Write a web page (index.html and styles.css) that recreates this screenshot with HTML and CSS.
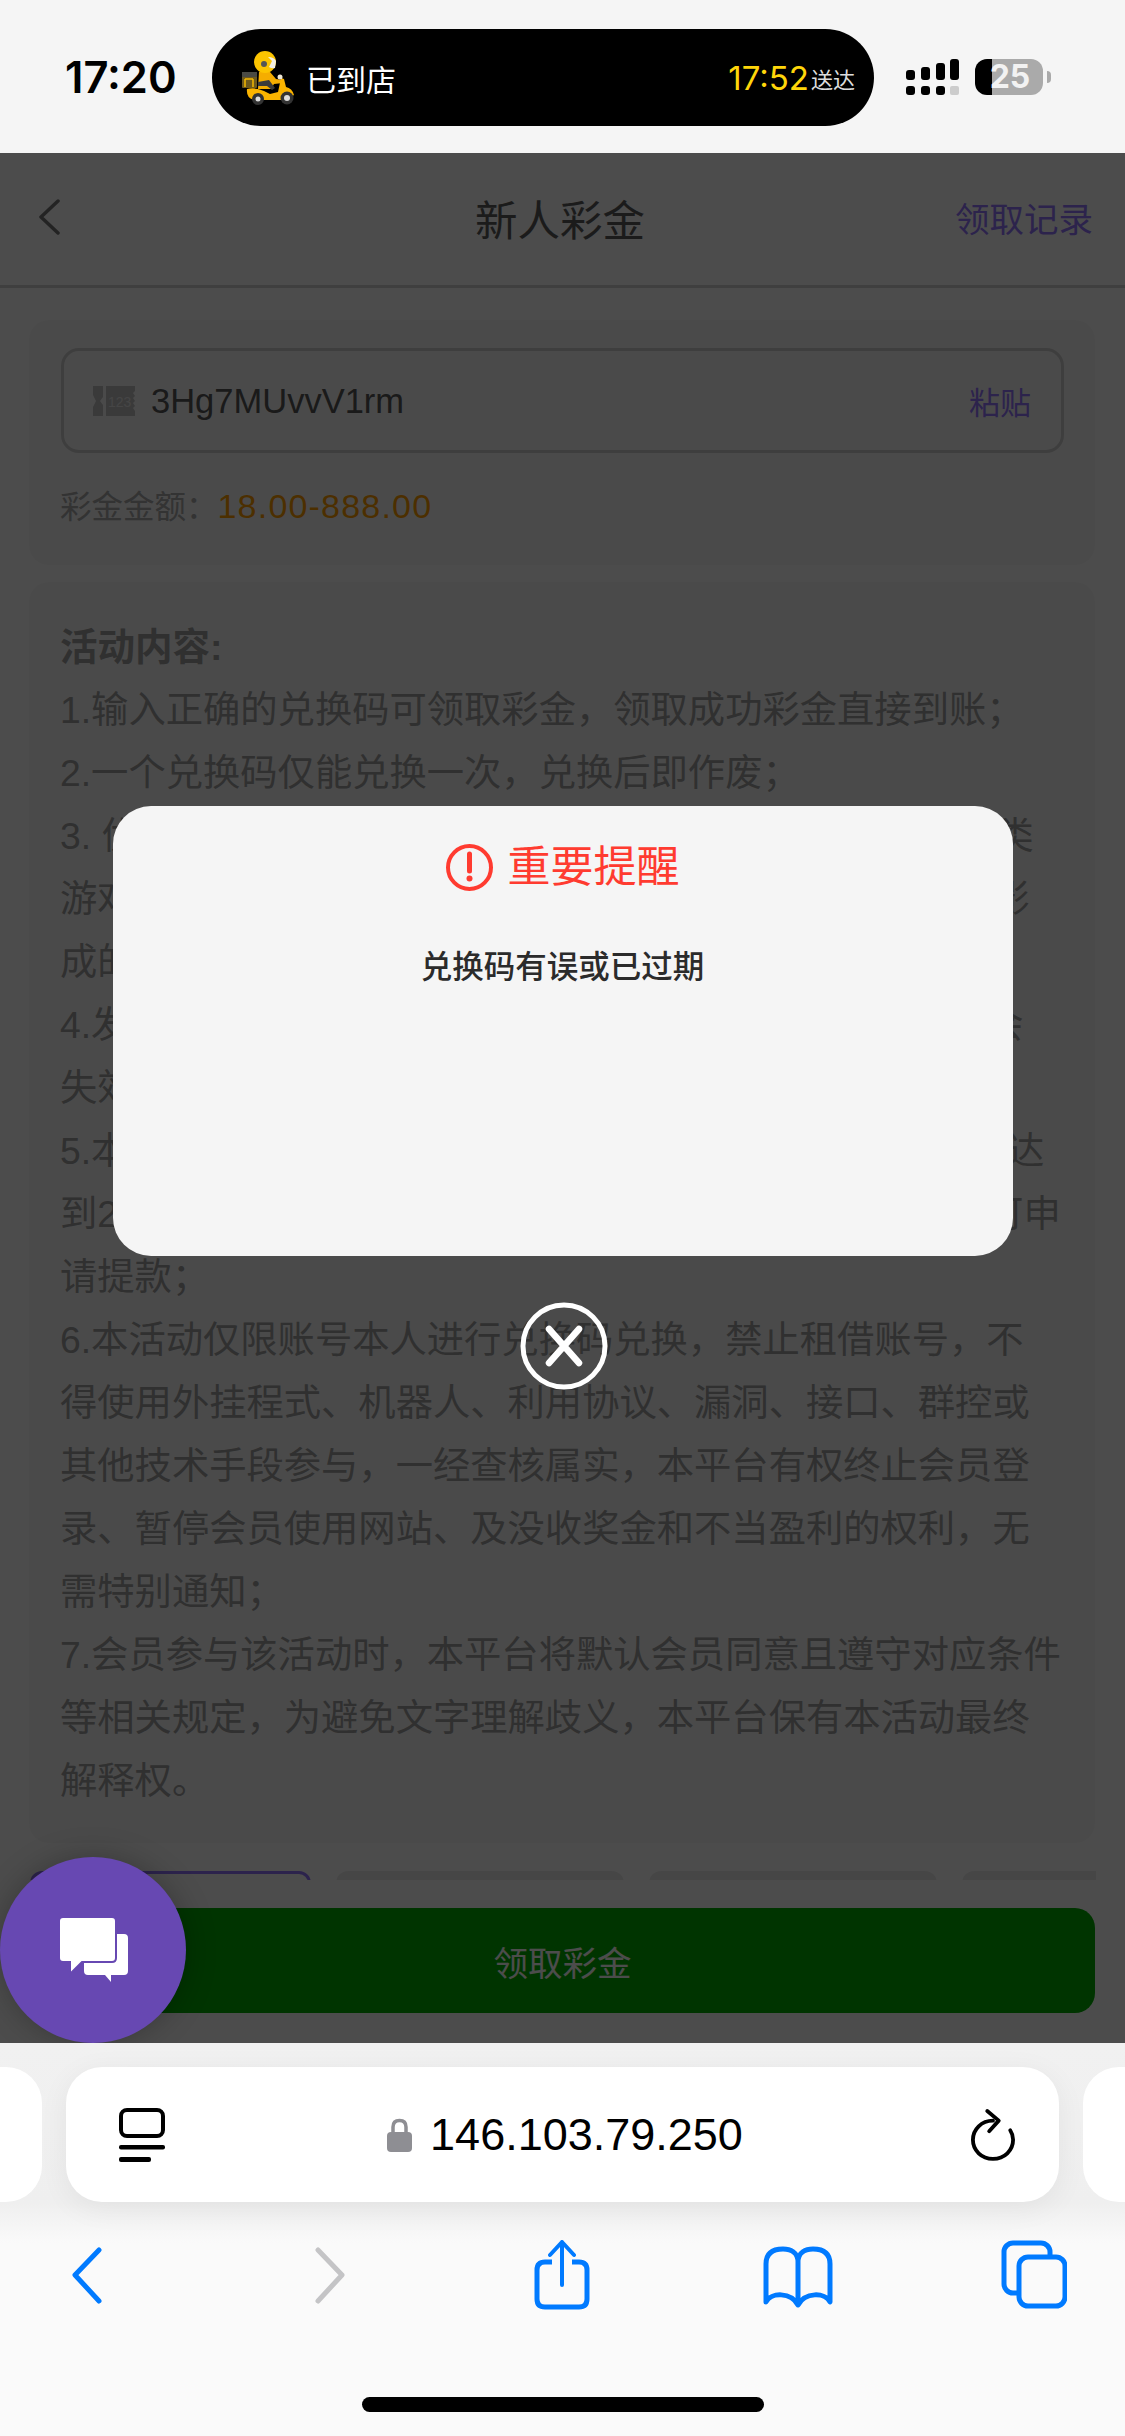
FILE: index.html
```html
<!DOCTYPE html>
<html lang="zh-CN">
<head>
<meta charset="UTF-8">
<meta name="viewport" content="width=device-width, initial-scale=1.0">
<title>新人彩金</title>
<link rel="stylesheet" href="styles.css">
</head>
<body>
<div class="phone">

<div class="status-bar">
<span class="clock">17:20</span>
<div class="island">
<svg class="rider" viewBox="0 0 52 54">
<rect x="0" y="21" width="15" height="16" rx="1" fill="#6e5a1e"/>
<rect x="0" y="21" width="15" height="5" fill="#4a4a44"/>
<path d="M3 28v8M11 28v8M3 28h8" stroke="#f5b800" stroke-width="1.5" fill="none"/>
<path d="M17 21q6-4 11 0l6 7 7 1v3l-9 1-3 5H16z" fill="#f5ad00"/>
<path d="M16 31l11-2 6 8-3 2-5-4H16z" fill="#3b3b3b"/>
<path d="M5 38q8-2 17 2l6 3 8-2 3-14 3 1 2 8q6 1 8 8l-8 5H12q-8-2-7-11z" fill="#fbb400"/>
<circle cx="16" cy="48" r="6" fill="#333"/>
<circle cx="16" cy="48" r="2.5" fill="#ddd"/>
<circle cx="45" cy="47" r="6.5" fill="#333"/>
<circle cx="45" cy="47" r="3" fill="#ddd"/>
<circle cx="23" cy="11" r="11" fill="#fcc400"/>
<path d="M26 6q6 0 8 4l-1 7q-3 1-6-1l3-6z" fill="#f4f0e4"/>
<circle cx="22" cy="13" r="3" fill="#555"/>
<circle cx="38" cy="26" r="2.5" fill="#f1e9d6"/>
</svg>
<span class="island-text">已到店</span>
<span class="eta">17:52</span>
<span class="eta-label">送达</span>
</div>
<svg class="signal" viewBox="0 0 53 36">
<g fill="#000">
<rect x="0" y="11" width="9" height="10" rx="3"/>
<rect x="15" y="8" width="9" height="13" rx="3"/>
<rect x="30" y="4" width="9" height="17" rx="3"/>
<rect x="44" y="0" width="9" height="21" rx="3"/>
<rect x="0" y="27" width="9" height="9" rx="3"/>
<rect x="15" y="27" width="9" height="9" rx="3"/>
<rect x="30" y="27" width="9" height="9" rx="3"/>
</g>
<rect x="44" y="27" width="9" height="9" rx="2" fill="#ccc"/>
</svg>
<div class="battery"><span>25</span></div>
<span class="battery-nub"></span>
</div>

<div class="page">
<div class="nav">
<svg class="nav-back" viewBox="0 0 24 36"><path d="M21 2L4 18l17 16" fill="none" stroke="#777" stroke-width="3.5" stroke-linecap="round" stroke-linejoin="round"/></svg>
<h1 class="nav-title">新人彩金</h1>
<a class="nav-link">领取记录</a>
</div>

<div class="card code-card">
<div class="code-input">
<svg class="ticket" viewBox="0 0 42 30">
<path d="M0 0h10v11l-3 4 3 4v11H0v-9l3-6-3-6z" fill="#c2c2c2"/>
<path d="M13 0h29v5l-2 2 2 3-2 2 2 3-2 2 2 3-2 2 2 3v5H13z" fill="#c2c2c2"/>
<text x="15" y="21" class="ticket-num">123</text>
</svg>
<span class="code-value">3Hg7MUvvV1rm</span>
<span class="paste">粘贴</span>
</div>
<p class="amount">彩金金额：<span class="amount-value">18.00-888.00</span></p>
</div>

<div class="card rules-card">
<h2 class="rules-title">活动内容:</h2>
<p class="rules">1.输入正确的兑换码可领取彩金，领取成功彩金直接到账；<br>
2.一个兑换码仅能兑换一次，兑换后即作废；<br>
3. 优惠活动仅限真人玩家参与，棋牌、电子、捕鱼等各种类<br>
游戏均可参与流水计算，彩金需要完成流水要求，否则将影<br>
成的损失由会员自行承担；<br>
4.发放的彩金需在规定时间内完成流水要求，逾期未完成会<br>
失效；<br>
5.本活动彩金需完成3倍流水方可提款，有效投注流水总需达<br>
到2倍 彩金金额，满足流水要求且账户余额达到最低限额可申<br>
请提款；<br>
6.本活动仅限账号本人进行兑换码兑换，禁止租借账号，不<br>
得使用外挂程式、机器人、利用协议、漏洞、接口、群控或<br>
其他技术手段参与，一经查核属实，本平台有权终止会员登<br>
录、暂停会员使用网站、及没收奖金和不当盈利的权利，无<br>
需特别通知；<br>
7.会员参与该活动时，本平台将默认会员同意且遵守对应条件<br>
等相关规定，为避免文字理解歧义，本平台保有本活动最终<br>
解释权。</p>
</div>

<div class="tabs">
<span class="tab tab-active"></span>
<span class="tab"></span>
<span class="tab"></span>
<span class="tab tab-last"></span>
</div>

<div class="claim-bar">
<button class="claim-btn">领取彩金</button>
</div>

<div class="overlay">
<div class="modal">
<div class="modal-head">
<svg class="alert-icon" viewBox="0 0 47 47">
<circle cx="23.5" cy="23.5" r="21.5" fill="none" stroke="#ff3b30" stroke-width="4"/>
<path d="M23.5 10v17" stroke="#ff3b30" stroke-width="5" stroke-linecap="round"/>
<circle cx="23.5" cy="34.5" r="3" fill="#ff3b30"/>
</svg>
<span class="modal-title">重要提醒</span>
</div>
<p class="modal-msg">兑换码有误或已过期</p>
</div>
<svg class="modal-close" viewBox="0 0 88 88">
<circle cx="44" cy="44" r="41" fill="none" stroke="#fff" stroke-width="5"/>
<path d="M29 27l30 34M59 27L29 61" stroke="#fff" stroke-width="6.5" stroke-linecap="round"/>
</svg>
</div>

<div class="chat">
<svg viewBox="0 0 69 66">
<path d="M29 17h36q4 0 4 4v33q0 4-4 4H52v7l-6-7H29q-4 0-4-4V21q0-4 4-4z" fill="#fff"/>
<path d="M4 0h49q4 0 4 4v37q0 4-4 4H23L11 57V45H4q-4 0-4-4V4q0-4 4-4z" fill="#fff" stroke="#6748b2" stroke-width="2"/>
</svg>
</div>
</div>

<div class="browser">
<div class="url-row">
<span class="url-side"></span>
<div class="url-bar">
<svg class="url-menu" viewBox="0 0 46 54">
<rect x="2" y="2" width="42" height="26" rx="6" fill="none" stroke="#000" stroke-width="4"/>
<rect x="0" y="37" width="46" height="4.5" rx="2" fill="#000"/>
<rect x="0" y="49" width="32" height="5" rx="2" fill="#000"/>
</svg>
<div class="url-host">
<svg class="lock" viewBox="0 0 25 34">
<path d="M6 16V9q0-6.500 6.500-6.500T19 9v7" fill="none" stroke="#8e8e93" stroke-width="3.500"/>
<rect x="0" y="14" width="25" height="20" rx="4" fill="#8e8e93"/>
</svg>
<span class="url-text">146.103.79.250</span>
</div>
<svg class="reload" viewBox="0 0 46 54">
<path d="M23 12C11 12 2 21 2 32s9 20 21 20 21-9 21-20c0-4-1-7-3-10" fill="none" stroke="#000" stroke-width="4" stroke-linecap="round"/>
<path d="M17 2l12 10-10 11" fill="none" stroke="#000" stroke-width="4" stroke-linecap="round" stroke-linejoin="round"/>
</svg>
</div>
<span class="url-side"></span>
</div>

<div class="toolbar">
<svg class="tool tool-back" viewBox="0 0 30 70"><path d="M27 10L3 35l24 26" fill="none" stroke="#007aff" stroke-width="5" stroke-linecap="round" stroke-linejoin="round"/></svg>
<svg class="tool tool-forward" viewBox="0 0 30 70"><path d="M3 10l24 25L3 61" fill="none" stroke="#c4c4c6" stroke-width="5" stroke-linecap="round" stroke-linejoin="round"/></svg>
<svg class="tool tool-share" viewBox="0 0 56 70">
<path d="M18 22H11q-8 0-8 8v29q0 8 8 8h34q8 0 8-8V30q0-8-8-8h-7" fill="none" stroke="#007aff" stroke-width="5"/>
<path d="M28 45V2M16 15L28 2l12 13" fill="none" stroke="#007aff" stroke-width="4" stroke-linecap="round" stroke-linejoin="round"/>
</svg>
<svg class="tool tool-book" viewBox="0 0 70 70">
<path d="M35 22C35 12 27 9 20 9 10 9 3 13 3 24V62C8 52 28 52 35 65 42 52 62 52 67 62V24C67 13 60 9 50 9 43 9 35 12 35 22V65" fill="none" stroke="#007aff" stroke-width="5" stroke-linejoin="round"/>
</svg>
<svg class="tool tool-tabs" viewBox="0 0 66 70">
<rect x="3" y="3" width="46" height="50" rx="9" fill="none" stroke="#007aff" stroke-width="5"/>
<rect x="18" y="17" width="46" height="49" rx="9" fill="#fafafa" stroke="#007aff" stroke-width="5"/>
</svg>
</div>
<div class="home-bar"></div>
</div>

</div>
</body>
</html>
```

FILE: styles.css
```css
* {
  box-sizing: border-box;
}

body {
  margin: 0;
  padding: 0;
  font-family: "Liberation Sans", "Noto Sans CJK SC", sans-serif;
  background-color: #f5f5f5;
}

h1, h2, p {
  margin: 0;
  font-weight: normal;
}

.phone {
  width: 1125px;
  height: 2436px;
  display: flex;
  flex-direction: column;
  overflow: hidden;
}

/* status bar */
.status-bar {
  height: 153px;
  display: flex;
  align-items: center;
  background-color: #f5f5f5;
}

.clock {
  width: 111px;
  margin-left: 65px;
  font-family: Inter, sans-serif;
  font-size: 43.5px;
  font-weight: 600;
  color: #000;
  white-space: nowrap;
}

.island {
  width: 662px;
  height: 97px;
  margin-left: 36px;
  margin-top: 2px;
  padding: 0 19px 0 30px;
  display: flex;
  align-items: center;
  background-color: #000;
  border-radius: 49px;
}

.rider {
  width: 52px;
  height: 54px;
}

.island-text {
  margin-left: 12px;
  font-size: 30px;
  color: #fff;
}

.eta {
  margin-left: auto;
  font-family: Inter, sans-serif;
  font-size: 33px;
  color: #ffd60a;
}

.eta-label {
  margin-left: 2px;
  font-size: 22px;
  color: #ddd;
}

.signal {
  width: 53px;
  height: 36px;
  margin-left: 32px;
}

.battery {
  width: 68px;
  height: 36px;
  margin-left: 16px;
  display: flex;
  align-items: center;
  justify-content: center;
  padding-left: 2px;
  border-radius: 12px;
  background: linear-gradient(to right, #000 17px, #aaa 17px);
}

.battery span {
  font-family: Inter, sans-serif;
  font-size: 32px;
  font-weight: 700;
  color: #f2f2f2;
}

.battery-nub {
  width: 4px;
  height: 12px;
  margin-left: 4px;
  border-radius: 0 4px 4px 0;
  background-color: #aaa;
}

/* page under the dimmer */
.page {
  position: relative;
  height: 1890px;
  overflow: hidden;
  background-color: #fff;
}

.nav {
  height: 135px;
  padding: 0 42px 4px 37px;
  display: grid;
  grid-template-columns: 1fr auto 1fr;
  align-items: center;
  border-bottom: 3px solid #d4d4d4;
}

.nav-back {
  width: 24px;
  height: 36px;
}

.nav-title {
  font-size: 42.5px;
  color: #5c5c5c;
}

.nav-link {
  justify-self: end;
  margin-right: -10px;
  font-size: 34.5px;
  color: #9575ff;
}

.card {
  margin: 0 30px 0 29px;
  background-color: #f9f9f9;
  border-radius: 20px;
}

.code-card {
  height: 245px;
  margin-top: 32px;
  padding: 28px 31px 0 32px;
}

.code-input {
  height: 105px;
  padding: 0 30px 0 29px;
  display: flex;
  align-items: center;
  border: 3px solid #d0d0d0;
  border-radius: 18px;
}

.ticket {
  width: 42px;
  height: 30px;
}

.ticket-num {
  font-size: 14px;
  fill: #e8e8e8;
}

.code-value {
  margin-left: 16px;
  padding-top: 2px;
  font-size: 34.5px;
  color: #575757;
}

.paste {
  margin-left: auto;
  font-size: 31px;
  color: #9575ff;
}

.amount {
  margin: 31px 0 0 -1px;
  font-size: 31.5px;
  line-height: 44px;
  color: #aaa;
}

.amount-value {
  font-size: 34px;
  letter-spacing: 1.2px;
  color: #ff9d00;
}

.rules-card {
  height: 1261px;
  margin-top: 17px;
  padding: 34px 20px 0 31px;
}

.rules-title {
  font-size: 37.5px;
  font-weight: bold;
  line-height: 63px;
  color: #a0a0a0;
}

.rules {
  font-size: 37.3px;
  line-height: 63px;
  color: #a0a0a0;
  white-space: nowrap;
}

.tabs {
  margin: 28px 0 0 30px;
  display: flex;
  gap: 25px;
}

.tab {
  width: 288px;
  height: 60px;
  background-color: #ececec;
  border-radius: 12px;
}

.tab-active {
  width: 281px;
  border: 3px solid #9575ff;
  background-color: #fff;
}

.tab-last {
  width: 134px;
  border-radius: 12px 0 0 12px;
}

.claim-bar {
  position: absolute;
  left: 0;
  right: 0;
  bottom: 0;
  height: 163px;
  padding: 28px 30px 0;
  background-color: #fff;
}

.claim-btn {
  width: 100%;
  height: 105px;
  border: none;
  border-radius: 20px;
  background-color: #00b000;
  font-family: inherit;
  font-size: 34.5px;
  color: #fff;
}

/* dimmer + dialog */
.overlay {
  position: absolute;
  top: 0;
  left: 0;
  right: 0;
  bottom: 0;
  padding-top: 653px;
  display: flex;
  flex-direction: column;
  align-items: center;
  background-color: rgba(0, 0, 0, 0.7);
}

.modal {
  width: 900px;
  height: 450px;
  padding-top: 38px;
  background-color: #f5f5f5;
  border-radius: 38px;
}

.modal-head {
  display: flex;
  align-items: center;
  justify-content: center;
  gap: 15px;
}

.alert-icon {
  width: 47px;
  height: 47px;
}

.modal-title {
  font-size: 43px;
  line-height: 47px;
  color: #ff3b30;
}

.modal-msg {
  margin-top: 54px;
  text-align: center;
  font-size: 31.5px;
  font-weight: 500;
  line-height: 44px;
  color: #2b2b2b;
}

.modal-close {
  width: 88px;
  height: 88px;
  margin: 46px 0 0 2px;
}

.chat {
  position: absolute;
  left: 0;
  bottom: 0;
  width: 186px;
  height: 186px;
  display: flex;
  align-items: center;
  justify-content: center;
  background-color: #6748b2;
  border-radius: 50%;
  box-shadow: 0 0 30px rgba(0, 0, 0, 0.25);
}

.chat svg {
  width: 69px;
  height: 66px;
}

/* safari bottom chrome */
.browser {
  flex: 1;
  background: linear-gradient(to bottom, #f1f1f1 0, #efefef 160px, #fafafa 200px);
}

.url-row {
  padding-top: 24px;
  margin-left: -951px;
  display: flex;
  gap: 24px;
}

.url-side {
  flex: none;
  width: 993px;
  height: 135px;
  background-color: #fff;
  border-radius: 36px;
}

.url-bar {
  flex: none;
  width: 993px;
  height: 135px;
  padding: 0 44px 0 53px;
  display: flex;
  align-items: center;
  justify-content: space-between;
  background-color: #fff;
  border-radius: 36px;
  box-shadow: 0 6px 30px rgba(0, 0, 0, 0.06);
}

.url-menu {
  width: 46px;
  height: 54px;
}

.url-host {
  margin-right: 6px;
  display: flex;
  align-items: center;
  gap: 18px;
}

.lock {
  width: 25px;
  height: 34px;
}

.url-text {
  font-size: 45px;
  color: #000;
}

.reload {
  width: 44px;
  height: 54px;
}

.toolbar {
  margin-top: 38px;
  padding-left: 72px;
  display: flex;
}

.tool {
  height: 70px;
}

.tool-back, .tool-forward {
  width: 30px;
}

.tool-forward {
  margin-left: 213px;
}

.tool-share {
  width: 56px;
  margin-left: 189px;
}

.tool-book {
  width: 70px;
  margin-left: 173px;
}

.tool-tabs {
  width: 66px;
  margin-left: 168px;
}

.home-bar {
  width: 402px;
  height: 15px;
  margin: 87px auto 0;
  background-color: #000;
  border-radius: 8px;
}
```
